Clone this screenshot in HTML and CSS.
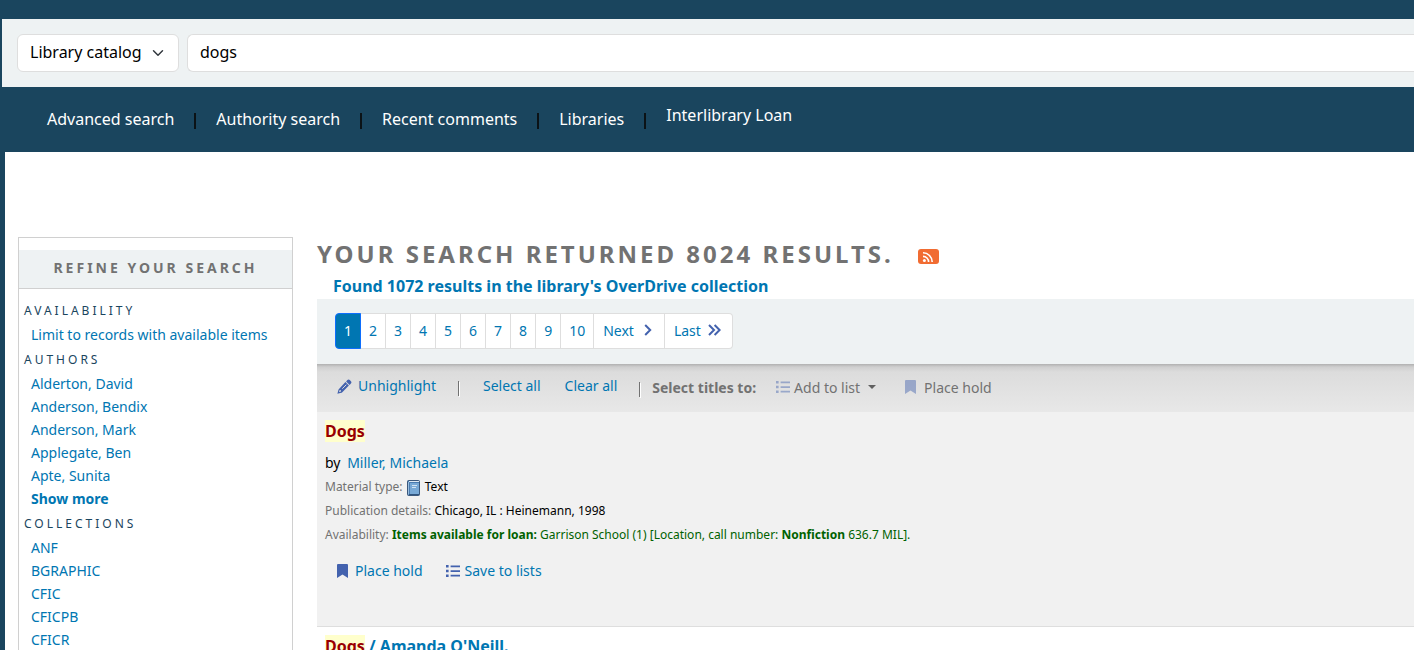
FILE: index.html
```html
<!DOCTYPE html>
<html lang="en">
<head>
    <meta charset="UTF-8">
    <meta name="viewport" content="width=device-width, initial-scale=1.0">
    <title>Results of search for 'dogs'</title>
    <link rel="stylesheet" href="styles.css">
</head>
<body>
    <svg class="icon-defs" aria-hidden="true">
        <symbol id="icon-bookmark" viewBox="0 0 11 14">
            <path d="M0 1.2C0 .5.5 0 1.2 0h8.6c.7 0 1.2.5 1.2 1.2V14l-5.5-3.4L0 14z"/>
        </symbol>
        <symbol id="icon-list" viewBox="0 0 14 12">
            <path d="M0 0h2.6v2.6H0zM0 4.7h2.6v2.6H0zM0 9.4h2.6V12H0zM4.6.5H14v1.7H4.6zM4.6 5.2H14v1.7H4.6zM4.6 9.8H14v1.7H4.6z"/>
        </symbol>
    </svg>

    <header>
        <form class="search-form" action="#">
            <select class="search-index" aria-label="Search the catalog by">
                <option>Library catalog</option>
            </select>
            <input class="search-term" type="text" name="q" value="dogs" aria-label="Enter search terms">
        </form>
        <nav class="main-nav">
            <ul>
                <li><a href="#">Advanced search</a></li>
                <li><a href="#">Authority search</a></li>
                <li><a href="#">Recent comments</a></li>
                <li><a href="#">Libraries</a></li>
                <li class="extra"><a href="#">Interlibrary Loan</a></li>
            </ul>
        </nav>
    </header>

    <main class="content">
        <aside class="facets">
            <h2>Refine your search</h2>
            <h3>Availability</h3>
            <ul>
                <li><a href="#">Limit to records with available items</a></li>
            </ul>
            <h3>Authors</h3>
            <ul>
                <li><a href="#">Alderton, David</a></li>
                <li><a href="#">Anderson, Bendix</a></li>
                <li><a href="#">Anderson, Mark</a></li>
                <li><a href="#">Applegate, Ben</a></li>
                <li><a href="#">Apte, Sunita</a></li>
                <li><a class="more" href="#">Show more</a></li>
            </ul>
            <h3>Collections</h3>
            <ul>
                <li><a href="#">ANF</a></li>
                <li><a href="#">BGRAPHIC</a></li>
                <li><a href="#">CFIC</a></li>
                <li><a href="#">CFICPB</a></li>
                <li><a href="#">CFICR</a></li>
            </ul>
        </aside>

        <section class="results">
            <h1>
                Your search returned 8024 results.
                <a class="rss" href="#" aria-label="Subscribe to this search">
                    <svg width="12" height="12" viewBox="0 0 12 12" fill="none" stroke="#fff" stroke-width="1.6">
                        <circle cx="2.4" cy="9.6" r="1.5" fill="#fff" stroke="none"/>
                        <path d="M1 5.4a5.6 5.6 0 0 1 5.6 5.6M1 1.8A9.2 9.2 0 0 1 10.2 11"/>
                    </svg>
                </a>
            </h1>
            <p class="overdrive"><a href="#">Found 1072 results in the library's OverDrive collection</a></p>

            <nav class="pages" aria-label="Search results pagination">
                <ul>
                    <li class="active"><a href="#">1</a></li>
                    <li><a href="#">2</a></li>
                    <li><a href="#">3</a></li>
                    <li><a href="#">4</a></li>
                    <li><a href="#">5</a></li>
                    <li><a href="#">6</a></li>
                    <li><a href="#">7</a></li>
                    <li><a href="#">8</a></li>
                    <li><a href="#">9</a></li>
                    <li><a href="#">10</a></li>
                    <li><a class="wide" href="#">Next
                        <svg class="next" width="8" height="12" viewBox="0 0 8 12"><path d="M1.2 1l5 5-5 5"/></svg></a></li>
                    <li><a class="wide" href="#">Last
                        <svg class="last" width="13" height="12" viewBox="0 0 13 12"><path d="M1 1l5 5-5 5M6.600 1l5 5-5 5"/></svg></a></li>
                </ul>
            </nav>

            <div class="toolbar">
                <div class="links">
                    <a href="#">
                        <svg class="icon" width="15" height="15" viewBox="0 0 15 15">
                            <path d="M10.4 1.1c.7-.7 1.7-.7 2.4 0l1.100 1.100c.7.7.7 1.700 0 2.400L12.600 5.900 9.100 2.400zM8.400 3.100l3.500 3.500-6.600 6.600c-.3.300-.6.500-1 .6L.4 14.800l1-3.900c.1-.4.300-.7.6-1zM2.600 11l-.6 2 2-.6v-1.200H2.800z" fill-rule="evenodd"/>
                            <path d="M5.300 9.700l4-4" stroke="#dcdcdc" stroke-width="1"/>
                        </svg>
                        Unhighlight</a>
                    <span class="divider"></span>
                    <a class="select-all" href="#">Select all</a>
                    <a href="#">Clear all</a>
                </div>
                <div class="selections">
                    <span class="divider"></span>
                    <strong>Select titles to:</strong>
                    <button class="add-list" type="button" disabled>
                        <svg class="icon" width="14" height="12"><use href="#icon-list"/></svg>
                        Add to list
                        <span class="caret"></span>
                    </button>
                    <button class="hold" type="button" disabled>
                        <svg class="icon" width="11" height="14"><use href="#icon-bookmark"/></svg>
                        Place hold
                    </button>
                </div>
            </div>

            <article class="record shaded">
                <h2><a href="#"><mark>Dogs</mark></a></h2>
                <p class="author">by <a href="#">Miller, Michaela</a></p>
                <p class="detail">
                    <span class="label">Material type:</span>
                    <svg class="book" width="13" height="16" viewBox="0 0 13 16">
                        <rect x=".5" y=".5" width="12" height="15" rx="1" fill="#4b7cb0" stroke="#3b587c"/>
                        <path d="M2 1.500h10" stroke="#dfe9f2"/>
                        <path d="M3 3h9v11H3z" fill="#78a9d6"/>
                        <path d="M1.500 2v12.500" stroke="#98bddf"/>
                        <path d="M5 5.500h5M5 7.500h4" stroke="#d3e4f3"/>
                        <path d="M2 14.500h10" stroke="#31557f"/>
                    </svg>
                    Text
                </p>
                <p class="detail"><span class="label">Publication details:</span> Chicago, IL : Heinemann, 1998</p>
                <p class="detail available"><span class="label">Availability:</span> <strong>Items available for loan:</strong> Garrison School (1) [Location, call number: <strong>Nonfiction</strong> 636.7 MIL].</p>
                <div class="actions">
                    <a href="#"><svg class="icon" width="11" height="14"><use href="#icon-bookmark"/></svg> Place hold</a>
                    <a class="save" href="#"><svg class="icon" width="14" height="12"><use href="#icon-list"/></svg> Save to lists</a>
                </div>
            </article>

            <article class="record">
                <h2><a href="#"><mark>Dogs</mark> / Amanda O'Neill.</a></h2>
            </article>
        </section>
    </main>
</body>
</html>
```
FILE: styles.css
```css
* {
    box-sizing: border-box;
}
html {
    background-color: #1a455e;
}
body {
    margin: 0;
    padding-top: 19px;
    font-family: "Noto Sans", sans-serif;
    font-size: 14px;
    color: #000;
}
ul {
    list-style: none;
    margin: 0;
    padding: 0;
}
a {
    color: #0076b2;
    text-decoration: none;
}
.icon-defs {
    display: none;
}
.icon {
    fill: #4362ae;
    flex: none;
}

/* search bar */
.search-form {
    display: flex;
    gap: 8px;
    margin-left: 2px;
    padding: 15px 0 15px 15px;
    background-color: #eef2f3;
}
.search-index,
.search-term {
    height: 38px;
    border: 1px solid #dedede;
    border-radius: 6px;
    background-color: #fff;
    color: #000;
    font-family: inherit;
    font-size: 16px;
}
.search-index {
    width: 162px;
    padding: 0 36px 2px 12px;
    appearance: none;
    background-image: url("data:image/svg+xml,%3Csvg xmlns='http://www.w3.org/2000/svg' viewBox='0 0 16 16'%3E%3Cpath fill='none' stroke='%23343a40' stroke-linecap='round' stroke-linejoin='round' stroke-width='2' d='m2 5 6 6 6-6'/%3E%3C/svg%3E");
    background-repeat: no-repeat;
    background-position: right 14px center;
    background-size: 12px;
}
.search-term {
    flex: 1;
    padding: 0 12px 2px;
    border-right: 0;
    border-radius: 6px 0 0 6px;
}

/* navigation */
.main-nav ul {
    display: flex;
    height: 65px;
    padding: 0 0 2px 47px;
    font-size: 16px;
    line-height: 24px;
}
.main-nav li {
    display: flex;
    align-items: center;
}
.main-nav li:not(:last-child)::after {
    content: "";
    width: 2px;
    height: 16px;
    margin: 4px 20px 0;
    background-color: #0b1216;
}
.main-nav .extra {
    padding-bottom: 8px;
}
.main-nav a {
    color: #fff;
}

.content {
    display: flex;
    gap: 24px;
    min-height: 100vh;
    margin-left: 5px;
    padding: 85px 0 0 13px;
    background-color: #fff;
}

/* facets */
.facets {
    flex: 0 0 275px;
    padding-top: 12px;
    border: 1px solid #d0d0d0;
}
.facets h2 {
    margin: 0 0 10px;
    padding: 7px 8px 9px;
    border-bottom: 1px solid #d0d0d0;
    background-color: #eef2f3;
    color: #727272;
    font-size: 14px;
    line-height: 22px;
    letter-spacing: 3px;
    text-align: center;
    text-transform: uppercase;
}
.facets h3 {
    margin: 0;
    padding-left: 5px;
    color: #1a455e;
    font-size: 12px;
    font-weight: normal;
    line-height: 24px;
    letter-spacing: 3px;
    text-transform: uppercase;
}
.facets ul {
    padding-bottom: 2px;
}
.facets li {
    padding-left: 12px;
    line-height: 23px;
}
.facets .more {
    font-weight: bold;
}

/* results */
.results {
    flex: 1;
    min-width: 0;
}
.results h1 {
    display: flex;
    align-items: center;
    margin: 0 0 2px;
    color: #727272;
    font-size: 24px;
    line-height: 34px;
    letter-spacing: 3px;
    text-transform: uppercase;
}
.rss {
    display: flex;
    width: 21px;
    height: 15px;
    margin: 4px 0 0 24px;
    padding: 2px 4px;
    border-radius: 3px;
    background-color: #f16c32;
}
.overdrive {
    margin: 0;
    padding-left: 16px;
    font-size: 16px;
    font-weight: bold;
    line-height: 26px;
}
.pages {
    padding: 14px 18px 15px;
    background-color: #eef2f3;
}
.pages ul {
    display: flex;
}
.pages a {
    display: flex;
    align-items: center;
    height: 36px;
    padding: 0 8px 2px;
    border: 1px solid #dedede;
    border-left-width: 0;
    background-color: #fff;
}
.pages .active a {
    border: 1px solid #0d6efd;
    border-radius: 4px 0 0 4px;
    background-color: #0076b2;
    color: #fff;
}
.pages .wide {
    padding-left: 9px;
}
.pages li:last-child a {
    border-radius: 0 4px 4px 0;
}
.pages svg {
    fill: none;
    stroke: #4362ae;
    stroke-width: 2;
}
.next {
    margin: 0 4px 0 10px;
}
.last {
    margin: 0 3px 0 7px;
}

/* toolbar above the records */
.toolbar {
    display: flex;
    height: 48px;
    padding-left: 20px;
    background: linear-gradient(#b0b0b0 0, #cfcfcf 3px, #dcdcdc 8px, #e8e8e8 100%);
    line-height: 22px;
}
.links,
.selections {
    display: flex;
    align-items: center;
}
.links {
    padding-bottom: 4px;
}
.links a {
    display: flex;
    align-items: center;
    gap: 6px;
}
.links .divider {
    margin: 4px 24px 0 22px;
}
.select-all {
    margin-right: 24px;
}
.divider {
    width: 1px;
    height: 15px;
    background-color: #727272;
    box-shadow: 1px 1px 0 #fff;
}
.selections {
    color: #727272;
}
.selections .divider {
    margin: 2px 12px 0 22px;
}
.selections button {
    display: flex;
    align-items: center;
    gap: 4px;
    padding: 0 0 2px;
    border: 0;
    background: none;
    color: #727272;
    font-family: inherit;
    font-size: 14px;
}
.selections .icon {
    opacity: 0.45;
}
.selections .add-list {
    margin: 0 29px 0 20px;
}
.selections .hold {
    gap: 8px;
}
.caret {
    margin-left: 4px;
    border: 4px solid transparent;
    border-top-color: #606060;
    border-bottom: 0;
}

.record {
    padding: 7px 8px 44px;
}
.record.shaded {
    border-bottom: 1px solid #dedede;
    background-color: #f1f1f1;
}
.record h2 {
    margin: 0 0 8px;
    font-size: 16px;
    line-height: 24px;
}
mark {
    background-color: #ffffcc;
    color: #990000;
}
.author {
    margin: 0;
    line-height: 24px;
}
.author a {
    margin-left: 3px;
}
.detail {
    margin: 0;
    font-size: 12px;
    line-height: 24px;
}
.label {
    color: #727272;
}
.book {
    margin: 0 2px 0 1px;
    vertical-align: -5px;
}
.available {
    color: #006100;
}
.actions {
    display: flex;
    gap: 23px;
    padding: 13px 12px 0;
    line-height: 22px;
}
.actions a {
    display: flex;
    align-items: center;
    gap: 7px;
}
.actions .save {
    gap: 5px;
}
```
